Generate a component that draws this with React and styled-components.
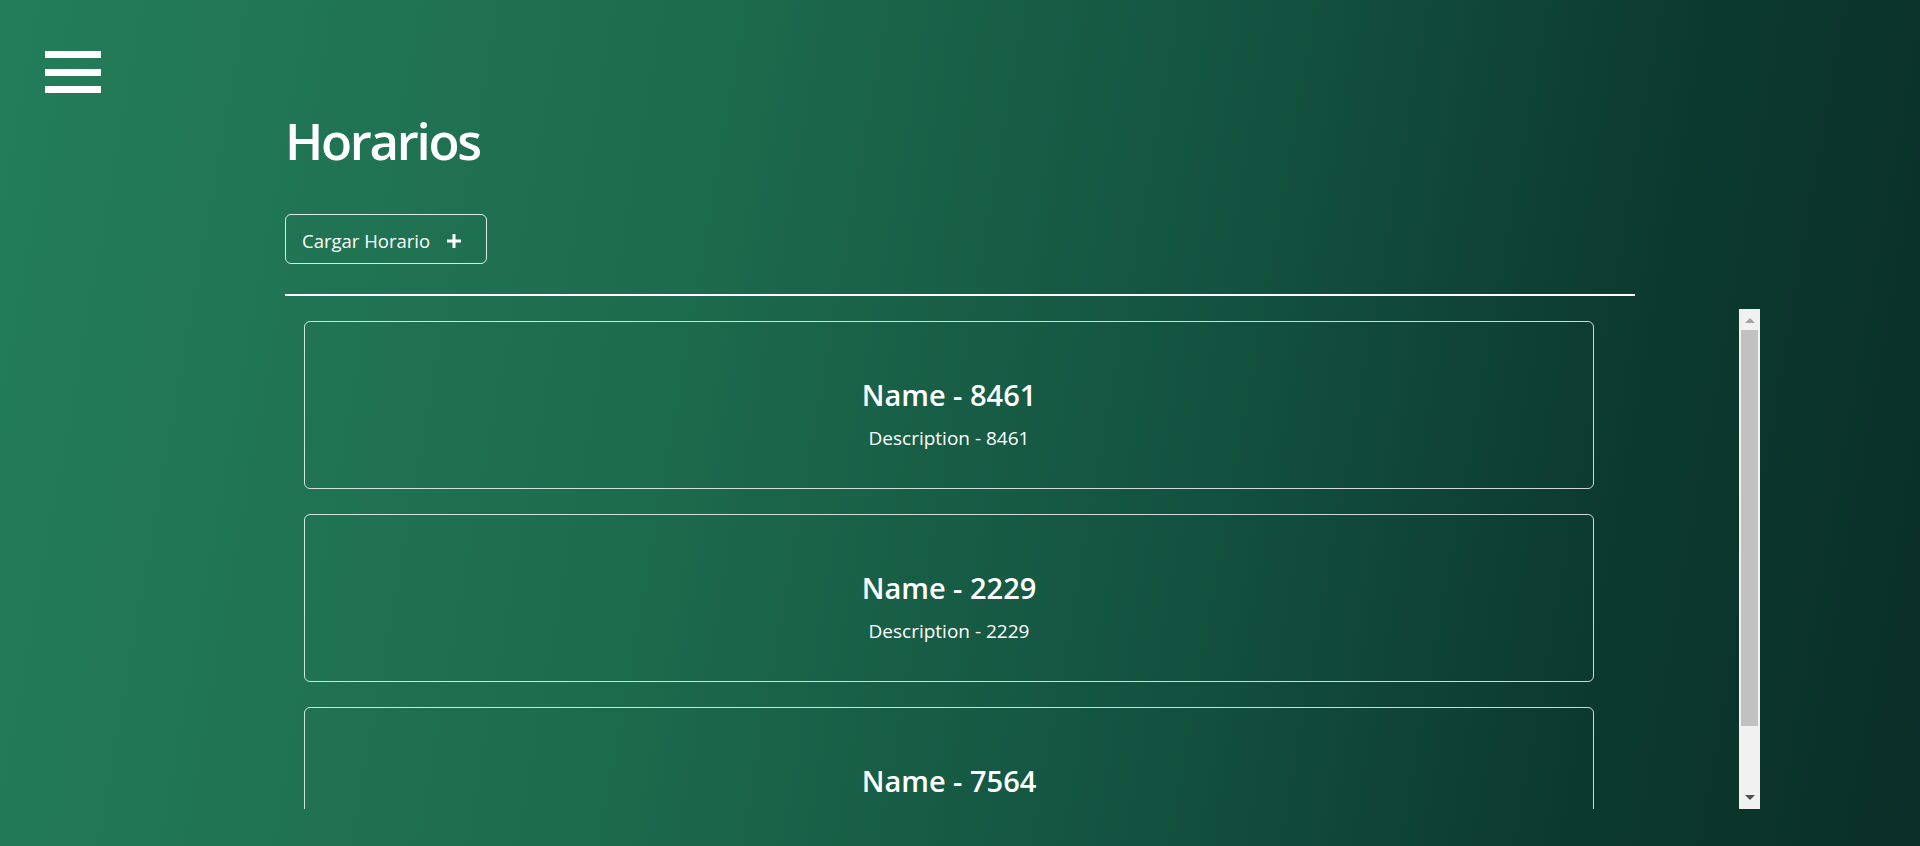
import React from "react";
import styled, { createGlobalStyle } from "styled-components";

const GlobalStyle = createGlobalStyle`
  html, body {
    margin: 0;
    padding: 0;
    height: 100%;
    overflow: hidden;
  }
  body {
    font-family: "Open Sans", "Noto Sans", sans-serif;
    color: #ffffff;
  }
  #root { height: 100%; }
  * { box-sizing: border-box; }
`;

const Page = styled.div`
  display: flex;
  height: 100vh;
  width: 100%;
  background: linear-gradient(100deg, #237d5a 0%, #1d6b4d 35%, #135240 62%, #0c3a2f 82%, #0a2f28 100%);
`;

const Sidebar = styled.aside`
  flex: 0 0 285px;
  padding: 51px 0 0 45px;
`;

const MenuButton = styled.button`
  display: flex;
  flex-direction: column;
  gap: 10.5px;
  width: 56px;
  padding: 0;
  background: none;
  border: 0;
  cursor: pointer;
`;

const MenuBar = styled.span`
  display: block;
  height: 7px;
  width: 100%;
  background: #ffffff;
`;

const Main = styled.main`
  flex: 1;
  display: flex;
  flex-direction: column;
  align-items: flex-start;
  padding-top: 108px;
`;

const Title = styled.h1`
  margin: 0;
  font-size: 51px;
  line-height: 64px;
  font-weight: 600;
  letter-spacing: -2.3px;
`;

const LoadButton = styled.button`
  display: flex;
  align-items: center;
  gap: 16px;
  margin-top: 42px;
  height: 50px;
  padding: 3px 24px 0 16px;
  border: 1px solid rgba(255, 255, 255, 0.85);
  border-radius: 6px;
  background: transparent;
  color: #ffffff;
  font-family: "Open Sans", "Noto Sans", sans-serif;
  font-size: 18.5px;
  cursor: pointer;
`;

const Divider = styled.hr`
  width: 1350px;
  height: 2px;
  margin: 30px 0 0;
  border: 0;
  background: #ffffff;
`;

const ScrollFrame = styled.section`
  display: flex;
  width: 1475px;
  height: 500px;
  margin-top: 13px;
`;

const CardList = styled.div`
  flex: 1;
  min-width: 0;
  overflow: hidden;
  display: flex;
  flex-direction: column;
  gap: 25px;
  padding: 12px 0 12px 19px;
`;

const ScrollTrack = styled.div`
  flex: 0 0 21px;
  display: flex;
  flex-direction: column;
  background: #f1f1f1;
`;

const ScrollArrow = styled.div`
  flex: 0 0 21px;
  display: flex;
  justify-content: center;
  align-items: center;
  padding: ${(p) => (p.$dir === "up" ? "2px 0 0" : "0 0 2px")};

  &::before {
    content: "";
    width: 0;
    height: 0;
    border-left: 5px solid transparent;
    border-right: 5px solid transparent;
    ${(p) =>
      p.$dir === "up"
        ? "border-bottom: 5px solid #a3a3a3;"
        : "border-top: 5px solid #505050;"}
  }
`;

const ThumbRail = styled.div`
  flex: 1;
  padding: 0 2px;
`;

const Thumb = styled.div`
  height: 396px;
  background: #c1c1c1;
`;

const Card = styled.article`
  flex: 0 0 168px;
  width: 1290px;
  display: flex;
  flex-direction: column;
  align-items: center;
  justify-content: center;
  border: 1px solid rgba(255, 255, 255, 0.8);
  border-radius: 6px;
  padding-top: 16px;
`;

const CardName = styled.h3`
  margin: 0;
  font-size: 29px;
  line-height: 38px;
  font-weight: 600;
`;

const CardDescription = styled.p`
  margin: 11px 0 0;
  font-size: 19px;
  line-height: 26px;
`;

const PlusIcon = () => (
  <svg width="16" height="16" viewBox="0 0 16 16" aria-hidden="true">
    <path d="M8 1v14M1 8h14" stroke="#fff" strokeWidth="3" strokeLinecap="butt" />
  </svg>
);

const horarios = [8461, 2229, 7564];

export default function App() {
  return (
    <>
      <GlobalStyle />
      <Page>
        <Sidebar>
          <MenuButton aria-label="Menú">
            <MenuBar />
            <MenuBar />
            <MenuBar />
          </MenuButton>
        </Sidebar>
        <Main>
          <Title>Horarios</Title>
          <LoadButton>
            Cargar Horario
            <PlusIcon />
          </LoadButton>
          <Divider />
          <ScrollFrame>
            <CardList>
              {horarios.map((id) => (
                <Card key={id}>
                  <CardName>Name - {id}</CardName>
                  <CardDescription>Description - {id}</CardDescription>
                </Card>
              ))}
            </CardList>
            <ScrollTrack aria-hidden="true">
              <ScrollArrow $dir="up" />
              <ThumbRail>
                <Thumb />
              </ThumbRail>
              <ScrollArrow $dir="down" />
            </ScrollTrack>
          </ScrollFrame>
        </Main>
      </Page>
    </>
  );
}
